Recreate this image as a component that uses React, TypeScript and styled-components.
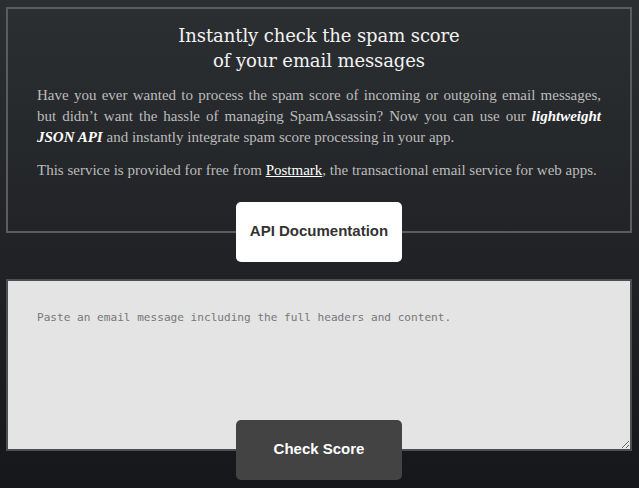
import React from "react";
import styled, { createGlobalStyle } from "styled-components";

const GlobalStyle = createGlobalStyle`
  html, body {
    margin: 0;
    height: 100%;
  }
  body {
    background: linear-gradient(to bottom, #2c2f32 0%, #16171a 100%);
    background-attachment: fixed;
    font-family: "Liberation Serif", serif;
  }
`;

const Page = styled.main`
  padding: 7px 7px 8px 6px;
`;

const Intro = styled.section`
  border: 2px solid #5a5c5e;
  padding: 14px 29px 50px;
`;

const Title = styled.h1`
  margin: 0 0 12px;
  font-family: "DejaVu Serif", serif;
  font-weight: normal;
  font-size: 18px;
  line-height: 25px;
  letter-spacing: -0.1px;
  text-align: center;
  color: #f2f2f2;
`;

const Lead = styled.p`
  margin: 0 0 12px;
  font-size: 15px;
  line-height: 21px;
  text-align: justify;
  color: #bcbcbc;

  &:last-child {
    margin-bottom: 0;
  }

  strong {
    color: #fff;
    font-style: italic;
  }

  a {
    color: #fff;
    text-decoration: underline;
  }
`;

const Actions = styled.div`
  display: flex;
  justify-content: center;
  margin-top: -31px;
  position: relative;
`;

const Button = styled.button<{ $dark?: boolean }>`
  width: 166px;
  height: 60px;
  padding: 0 0 3px;
  border: 0;
  border-radius: 5px;
  font-family: "Liberation Sans", Arial, sans-serif;
  font-weight: bold;
  font-size: 15px;
  cursor: pointer;
  background: ${(p) => (p.$dark ? "#434343" : "#ffffff")};
  color: ${(p) => (p.$dark ? "#ffffff" : "#333333")};
`;

const Form = styled.form`
  margin-top: 17px;
`;

const Message = styled.textarea`
  display: block;
  box-sizing: border-box;
  width: 100%;
  height: 172px;
  margin: 0;
  padding: 30px 29px;
  border: 2px solid #4c4e50;
  background: #e4e4e4;
  font-family: "DejaVu Sans Mono", monospace;
  font-size: 11.1px;
  line-height: 14px;
  color: #333;
  outline: none;

  &::placeholder {
    color: #777777;
  }
`;

export default function App() {
  return (
    <>
      <GlobalStyle />
      <Page>
        <Intro>
          <Title>
            Instantly check the spam score
            <br />
            of your email messages
          </Title>
          <Lead>
            Have you ever wanted to process the spam score of incoming or
            outgoing email messages, but didn’t want the hassle of managing
            SpamAssassin? Now you can use our <strong>lightweight JSON API</strong>{" "}
            and instantly integrate spam score processing in your app.
          </Lead>
          <Lead>
            This service is provided for free from <a href="#">Postmark</a>,
            the transactional email service for web apps.
          </Lead>
        </Intro>
        <Actions>
          <Button type="button">API Documentation</Button>
        </Actions>
        <Form onSubmit={(e) => e.preventDefault()}>
          <Message placeholder="Paste an email message including the full headers and content." />
          <Actions>
            <Button type="submit" $dark>
              Check Score
            </Button>
          </Actions>
        </Form>
      </Page>
    </>
  );
}
